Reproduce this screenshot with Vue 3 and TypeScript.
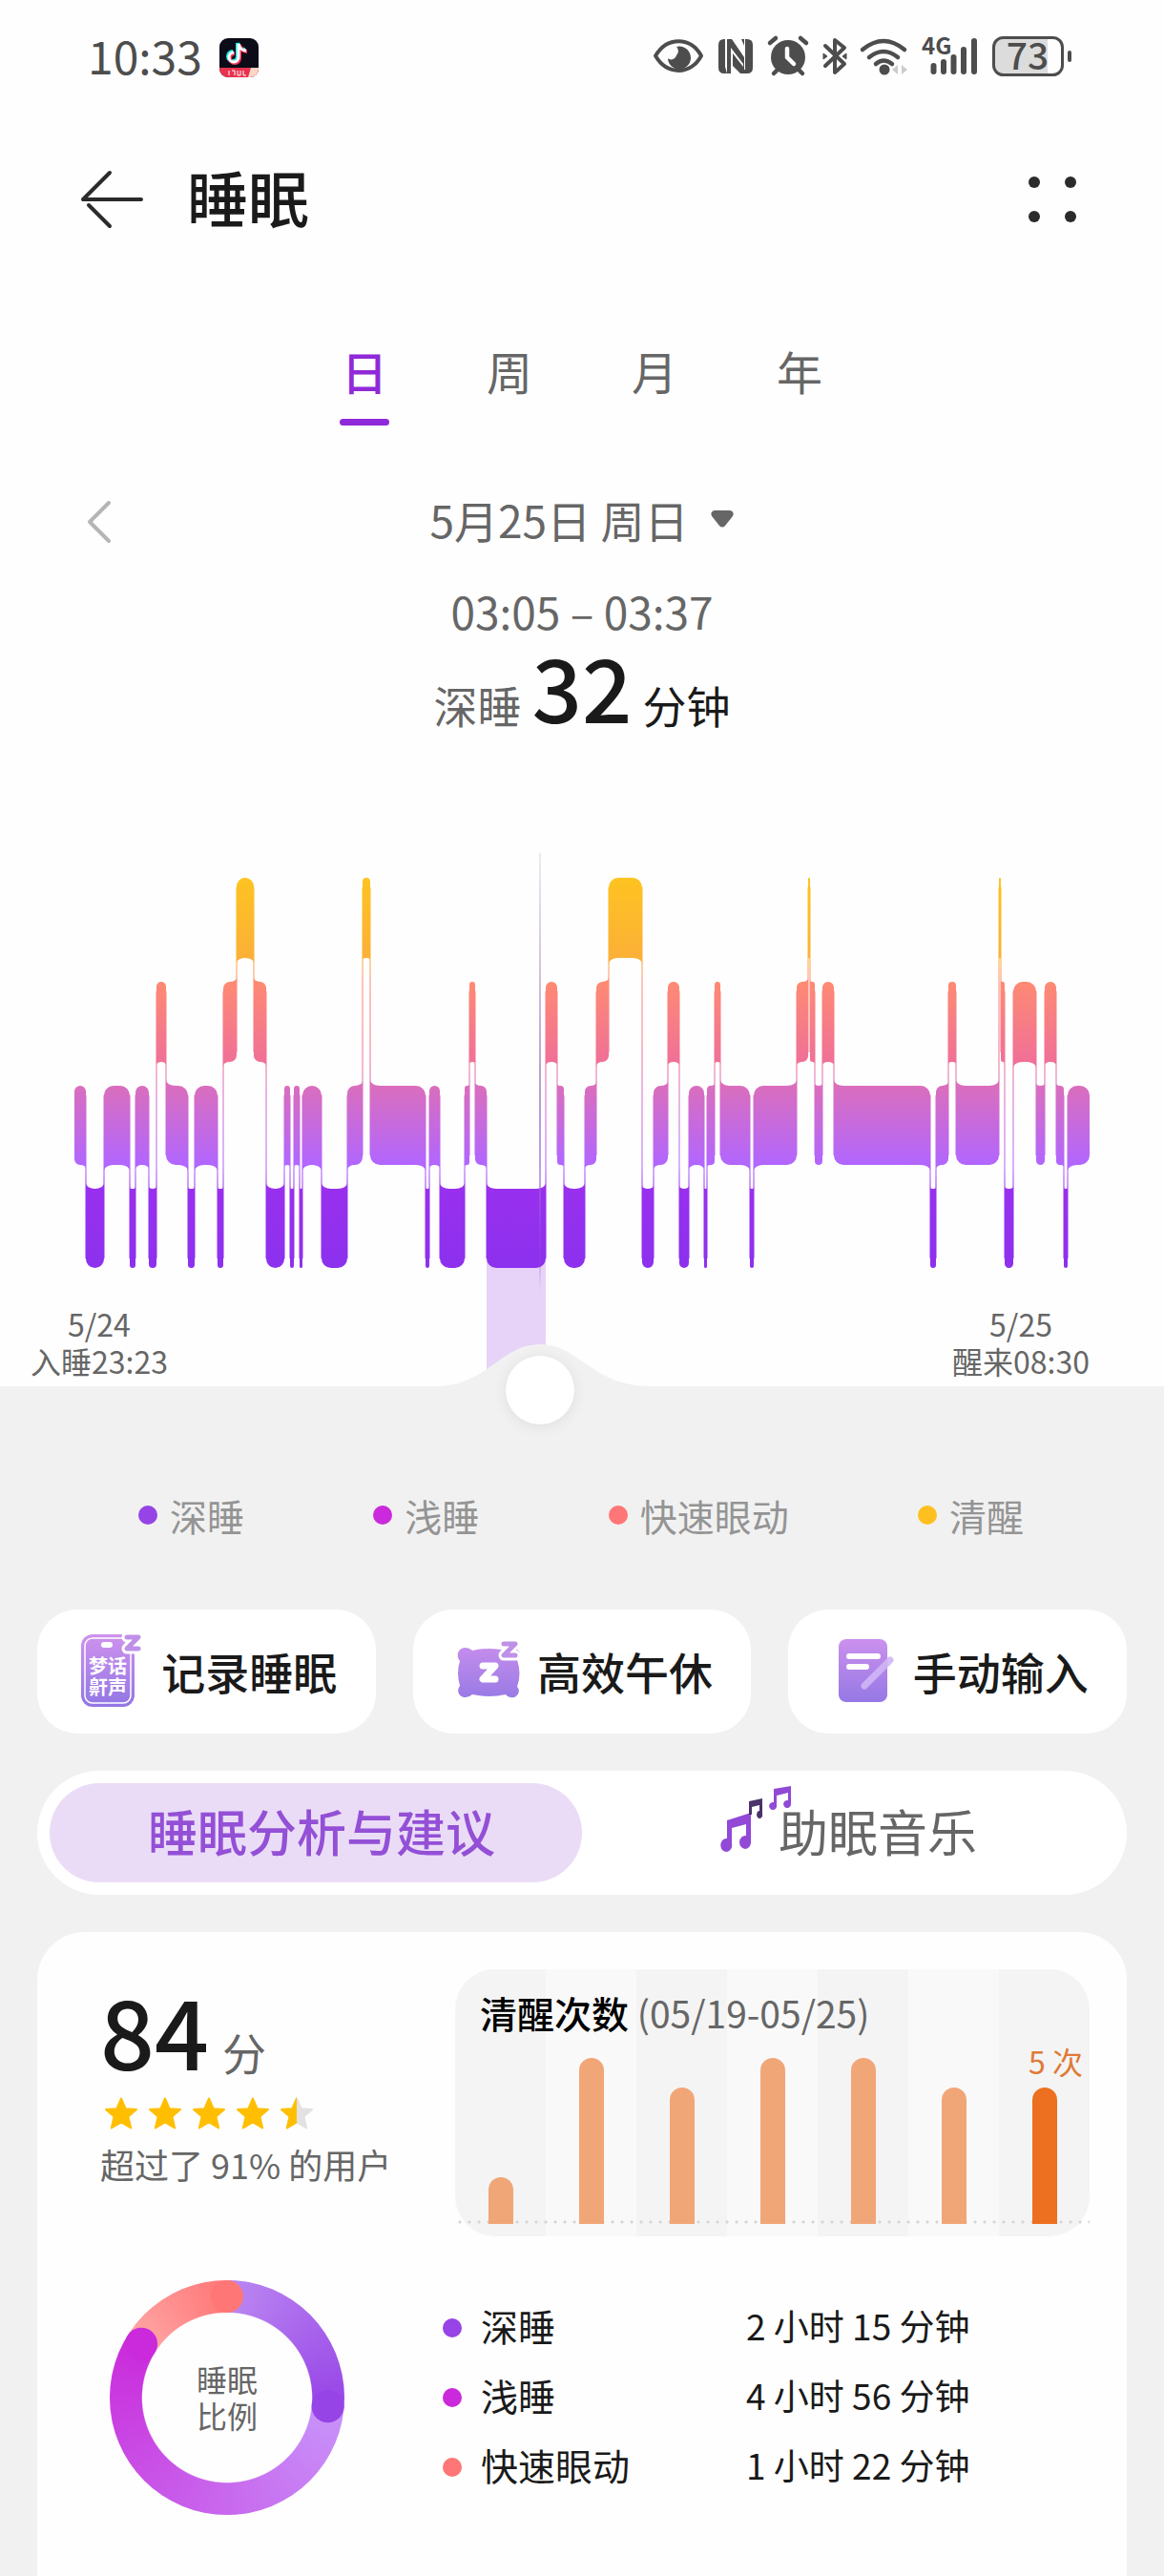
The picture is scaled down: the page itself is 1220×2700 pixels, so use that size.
<script setup lang="ts">
import { computed, ref } from 'vue'

type Level = 'A' | 'R' | 'L' | 'D'

const bands: Record<Level, { top: number; bottom: number; rank: number }> = {
  A: { top: 921, bottom: 1005, rank: 3 },
  R: { top: 1030, bottom: 1114, rank: 2 },
  L: { top: 1139, bottom: 1222, rank: 1 },
  D: { top: 1247, bottom: 1330, rank: 0 },
}

// Start of each sleep phase on the chart's horizontal axis
const phases: [number, Level][] = [
  [78, 'L'], [90, 'D'], [109, 'L'], [136, 'D'], [142, 'L'], [156, 'D'], [164, 'R'], [174, 'L'],
  [197, 'D'], [204, 'L'], [228, 'D'], [234, 'R'], [248, 'A'], [266, 'R'], [279, 'D'], [298, 'L'],
  [304, 'D'], [308, 'L'], [314, 'D'], [317, 'L'], [337, 'D'], [364, 'L'], [380, 'A'], [388, 'L'],
  [446, 'D'], [450, 'L'], [461, 'D'], [487, 'L'], [492, 'R'], [498, 'L'], [510, 'D'], [572, 'R'],
  [584, 'L'], [591, 'D'], [613, 'L'], [625, 'R'], [638, 'A'], [673, 'D'], [685, 'L'], [700, 'R'],
  [712, 'D'], [722, 'L'], [738, 'D'], [741, 'L'], [749, 'R'], [755, 'L'], [786, 'D'], [790, 'L'],
  [835, 'R'], [847, 'A'], [849, 'R'], [854, 'L'], [862, 'R'], [874, 'L'], [975, 'D'], [981, 'L'],
  [994, 'R'], [1002, 'L'], [1047, 'A'], [1049, 'R'], [1053, 'D'], [1062, 'R'], [1086, 'L'],
  [1095, 'R'], [1107, 'L'], [1115, 'D'], [1119, 'L'],
]
const axisStart = 78
const axisEnd = 1142

const segments = phases.map(([x, level], i) => {
  const end = i + 1 < phases.length ? phases[i + 1][0] : axisEnd
  const { top, bottom, rank } = bands[level]
  const prev = i > 0 ? bands[phases[i - 1][1]].rank : null
  const next = i + 1 < phases.length ? bands[phases[i + 1][1]].rank : null
  const r = Math.min(10, (end - x) / 2)
  const f = r * 0.6
  // An edge flares towards its neighbour's band and is rounded on the far side
  const tl = prev !== null && prev > rank ? -f : r
  const tr = next !== null && next > rank ? -f : r
  const bl = prev !== null && prev < rank ? -f : r
  const br = next !== null && next < rank ? -f : r
  const arc = (v: number, toX: number, toY: number) => `A${r} ${Math.abs(v)} 0 0 ${v > 0 ? 1 : 0} ${toX} ${toY}`
  const path =
    `M${x} ${top + tl}${arc(tl, x + r, top)}L${end - r} ${top}${arc(tr, end, top + tr)}` +
    `L${end} ${bottom - br}${arc(br, end - r, bottom)}L${x + r} ${bottom}${arc(bl, x, bottom - bl)}Z`
  return { x, end, level, path }
})

const connectors = segments.slice(1).map((s, i) => {
  const a = bands[segments[i].level]
  const b = bands[s.level]
  const up = a.top < b.top ? a : b
  const down = a.top < b.top ? b : a
  return { x: s.x, y: up.top + 10, height: down.bottom - up.top - 20 }
})

const position = ref(459)
const cursorX = computed(() => Math.round(axisStart + (position.value / 1000) * (axisEnd - axisStart)))
const selected = computed(() => segments.find((s) => cursorX.value < s.end) ?? segments[segments.length - 1])
const hill = computed(() => {
  const c = cursorX.value
  return `M0 1454H${c - 112}C${c - 54} 1454 ${c - 42} 1410 ${c} 1410C${c + 42} 1410 ${c + 54} 1454 ${c + 116} 1454H1220V1494H0Z`
})

const ranges = ['日', '周', '月', '年']
const range = ref('日')

const legend = [
  { name: '深睡', color: '#9744e6' },
  { name: '浅睡', color: '#ca2adb' },
  { name: '快速眼动', color: '#ff7676' },
  { name: '清醒', color: '#fec021' },
]

const durations = [
  { name: '深睡', color: '#9744e6', time: '2 小时 15 分钟' },
  { name: '浅睡', color: '#ca2adb', time: '4 小时 56 分钟' },
  { name: '快速眼动', color: '#ff7676', time: '1 小时 22 分钟' },
]

const awake = [49, 174, 143, 174, 174, 143, 143]
const star = 'M17 1.500L21.600 12.200L33 13L24.400 20.600L27.200 32.500L17 26.400L6.800 32.500L9.600 20.600L1 13L12.400 12.200Z'

function capAt(degrees: number) {
  const a = (degrees * Math.PI) / 180
  return { cx: 123 + 106 * Math.sin(a), cy: 123 - 106 * Math.cos(a) }
}
const caps = [
  { ...capAt(95), color: '#9744e6' },
  { ...capAt(302), color: '#ca2adb' },
  { ...capAt(0), color: '#ff7676' },
]
</script>

<template>
  <div class="page">
    <section class="top">
      <div class="status">
        <span class="clock">10:33</span>
        <svg class="app" width="41" height="41" viewBox="0 0 41 41">
          <defs><clipPath id="appclip"><rect width="41" height="41" rx="9" /></clipPath></defs>
          <g clip-path="url(#appclip)">
            <rect width="41" height="41" fill="#0c0c18" />
            <g fill="none" stroke-width="4">
              <path d="M20 6v14a5 5 0 1 1-5-5M20 6c1 4 4 7 8 7" stroke="#25e8e4" transform="translate(-1 -1)" />
              <path d="M20 6v14a5 5 0 1 1-5-5M20 6c1 4 4 7 8 7" stroke="#f5365c" transform="translate(1 1)" />
              <path d="M20 6v14a5 5 0 1 1-5-5M20 6c1 4 4 7 8 7" stroke="#fff" stroke-width="3" />
            </g>
            <rect y="31" width="41" height="10" fill="#e8324f" />
            <path d="M33 31h8v10H30z" fill="#ffd6c4" />
            <path d="M10 34v5M13 34h3v5M19 34v5h3v-5M25 34v5h3" stroke="#fff" stroke-width="1" fill="none" />
          </g>
        </svg>
        <svg class="indicators" width="460" height="60" viewBox="0 0 460 60" fill="none" stroke="#4d4d4d">
          <path d="M11 28.500C23 8 48 8 59 28.500C48 49 23 49 11 28.500Z" stroke-width="4" stroke-linejoin="round" />
          <path d="M33 19a12 12 0 1 1-9 12c3 3 8 1 9-3 3-3 2-7 0-9Z" fill="#4d4d4d" stroke="none" />
          <g stroke="none" fill="#4d4d4d">
            <path d="M83 11h1v29l2 7h-3q-6 0-6-6V17q0-6 6-6Z" />
            <path d="M86 11h5l13 19V18l-3-7h6q6 0 6 6v24q0 6-6 6h-4V37L90 20v27h-4Z" />
            <path d="M92 26l11 14v7h-3l-8-8Z" />
            <path d="M104 11h1v32h-1z" fill="#fff" />
            <circle cx="150" cy="30" r="18" />
          </g>
          <path d="M131 15l6-5M169 15l-6-5M139 43l-4 4M161 43l4 4" stroke-width="4.500" stroke-linecap="round" />
          <path d="M149 21v9l7 7" stroke="#fefefe" stroke-width="4.500" stroke-linecap="round" />
          <path d="M189 18l20 19-10 9V12l10 8-20 19" stroke-width="4" stroke-linejoin="round" stroke-linecap="round" />
          <path d="M187 26v6l4-3zM211 26v6l-4-3z" fill="#4d4d4d" stroke-width="1" />
          <path d="M228 22q22-18 44 0M235 30q15-12 30 0M242 37q8-7 17 0" stroke-width="4.500" stroke-linecap="round" />
          <circle cx="251" cy="43" r="5.500" fill="#4d4d4d" stroke="none" />
          <path d="M265 38v10l-6-5zM269 38v10l6-5z" fill="#ccc" stroke="none" />
          <text x="290" y="27" class="net">4G</text>
          <path d="M302.500 39v6M313 35v10M323.500 30v15M334 22v23M345 13v32" stroke-width="6" stroke-linecap="round" />
          <path d="M376 10h46v38h-46q-10 0-10-10V20q0-10 10-10z" fill="#dcdcdc" stroke="none" />
          <rect x="365.500" y="9.500" width="72" height="39" rx="10" stroke-width="3" />
          <path d="M445 25v8" stroke-width="4" stroke-linecap="round" />
          <text x="401" y="43" text-anchor="middle" class="charge">73</text>
        </svg>
      </div>

      <header class="header">
        <button class="icon-button" aria-label="返回">
          <svg width="66" height="60" viewBox="0 0 66 60" fill="none" stroke="#2b2b2b" stroke-width="4" stroke-linecap="round" stroke-linejoin="round">
            <path d="M31 2L3 30h61M9 36l22 22" />
          </svg>
        </button>
        <h1>睡眠</h1>
        <button class="icon-button more" aria-label="更多">
          <svg width="50" height="50" viewBox="0 0 50 50" fill="#2b2b2b">
            <circle cx="6" cy="7" r="6" /><circle cx="44" cy="7" r="6" />
            <circle cx="6" cy="43" r="6" /><circle cx="44" cy="43" r="6" />
          </svg>
        </button>
      </header>

      <nav class="tabs">
        <button v-for="r in ranges" :key="r" :class="{ active: r === range }" @click="range = r">{{ r }}</button>
      </nav>

      <div class="date-row">
        <button class="icon-button" aria-label="前一天">
          <svg width="26" height="46" viewBox="0 0 26 46" fill="none" stroke="#b5b5b5" stroke-width="4" stroke-linecap="round" stroke-linejoin="round"><path d="M23 3L3 23l20 20" /></svg>
        </button>
        <button class="date">
          5月25日 周日
          <svg width="24" height="18" viewBox="0 0 24 18" fill="#666"><path d="M4 0h16q5 1 3 6l-8 10q-3 3-6 0L1 6Q-1 1 4 0Z" /></svg>
        </button>
      </div>

      <p class="span-time">03:05 – 03:37</p>
      <p class="span-value"><span>深睡</span><strong>32</strong><em>分钟</em></p>
    </section>

    <div class="chart">
      <svg viewBox="0 880 1220 614" aria-hidden="true">
        <defs>
          <linearGradient id="phase" gradientUnits="userSpaceOnUse" x1="0" y1="921" x2="0" y2="1330">
            <stop offset="0" stop-color="#fec321" />
            <stop offset="0.205" stop-color="#fbb037" />
            <stop offset="0.267" stop-color="#fe8a73" />
            <stop offset="0.472" stop-color="#f07097" />
            <stop offset="0.533" stop-color="#da6ebd" />
            <stop offset="0.736" stop-color="#b166ff" />
            <stop offset="0.797" stop-color="#9830ee" />
            <stop offset="1" stop-color="#8c31ee" />
          </linearGradient>
          <linearGradient id="cursor" x1="0" y1="0" x2="0" y2="1">
            <stop offset="0" stop-color="#eeeaf0" />
            <stop offset="0.500" stop-color="#b9a0d0" />
            <stop offset="0.900" stop-color="#9345d8" stop-opacity="0.400" />
            <stop offset="1" stop-color="#9345d8" stop-opacity="0" />
          </linearGradient>
        </defs>
        <rect y="880" width="1220" height="575" fill="#fefefe" />
        <rect :x="selected.x" y="1318" :width="selected.end - selected.x" height="130" fill="#e6d3f7" />
        <path :d="hill" fill="#f1f1f1" />
        <g fill="url(#phase)">
          <path v-for="s in segments" :key="s.x" :d="s.path" />
          <rect v-for="c in connectors" :key="c.x" :x="c.x - 0.5" :y="c.y" width="1" :height="c.height" />
        </g>
        <rect :x="cursorX - 1" y="895" width="2" height="460" fill="url(#cursor)" />
      </svg>
      <div class="bounds">
        <p>5/24<br />入睡23:23</p>
        <p>5/25<br />醒来08:30</p>
      </div>
      <input v-model.number="position" class="scrubber" type="range" min="0" max="1000" aria-label="时间位置" />
    </div>

    <ul class="legend">
      <li v-for="l in legend" :key="l.name"><i class="dot" :style="{ background: l.color }"></i>{{ l.name }}</li>
    </ul>

    <div class="actions">
      <button>
        <svg width="80" height="80" viewBox="0 0 80 80">
          <defs>
            <linearGradient id="lilac" gradientUnits="userSpaceOnUse" x1="0" y1="2" x2="0" y2="77">
              <stop offset="0" stop-color="#cf92ee" /><stop offset="1" stop-color="#9277e4" />
            </linearGradient>
          </defs>
          <rect x="6" y="2" width="56" height="76" rx="12" fill="url(#lilac)" />
          <rect x="10" y="6" width="48" height="68" rx="8" fill="none" stroke="#fff" stroke-width="1.500" />
          <rect x="27" y="10" width="12" height="6" rx="3" fill="#fff" />
          <text x="34" y="43" text-anchor="middle" class="badge">梦话</text>
          <text x="34" y="65" text-anchor="middle" class="badge">鼾声</text>
          <path d="M54 5h12L54 17h12" class="z-halo" /><path d="M54 5h12L54 17h12" class="z" />
        </svg>
        记录睡眠
      </button>
      <button>
        <svg width="80" height="80" viewBox="0 0 80 80">
          <path d="M14 16q5 0 8 3 18-4 35 0c4-4 15-3 15 4q0 3-3 6 5 14 0 28c5 5-1 13-7 11q-3 0-5-3-17 4-35 0-3 3-7 3c-7 0-10-7-6-12q-4-14 0-26c-5-6-1-14 5-14Z" fill="url(#lilac)" />
          <path d="M33 35h13L33 49h13" fill="none" stroke="#fff" stroke-width="7" stroke-linecap="round" stroke-linejoin="round" />
          <path d="M55 12h12L55 24h12" class="z-halo" /><path d="M55 12h12L55 24h12" class="z" />
        </svg>
        高效午休
      </button>
      <button>
        <svg width="80" height="80" viewBox="0 0 80 80" stroke-linecap="round">
          <rect x="12" y="7" width="51" height="66" rx="8" fill="url(#lilac)" />
          <path d="M23 25h30M23 36h18" stroke="#fff" stroke-width="6" />
          <path d="M66 29L39 56" stroke="#d0b6f5" stroke-width="7" stroke-opacity="0.900" />
        </svg>
        手动输入
      </button>
    </div>

    <div class="switch">
      <button class="on">睡眠分析与建议</button>
      <button>
        <svg width="62" height="66" viewBox="0 0 62 66" fill="#9149d6">
          <path d="M8 36L33 28V58a6 7 0 1 1-5-6V40L13 44V60a6 7 0 1 1-5-5Z" />
          <path d="M31 16L45 13V29a3 4 0 1 1-3-3V20L34 22V30H31Z" fill="#4b3269" />
          <path d="M57 3L75 0V18a4 4 0 1 1-3-3V7L60 10V20a4 4 0 1 1-3-3Z" />
        </svg>
        助眠音乐
      </button>
    </div>

    <section class="report">
      <div class="summary">
        <div class="score">
          <p class="points"><strong>84</strong><span>分</span></p>
          <div class="stars" role="img" aria-label="4.5">
            <svg v-for="n in 5" :key="n" width="34" height="34" viewBox="0 0 34 34" stroke-width="2" stroke-linejoin="round">
              <template v-if="n < 5"><path :d="star" fill="#ffbf00" stroke="#ffbf00" /></template>
              <template v-else>
                <defs><clipPath id="half"><rect width="17" height="34" /></clipPath></defs>
                <path :d="star" fill="#e2e2e4" stroke="#e2e2e4" />
                <path :d="star" fill="#ffbf00" stroke="#ffbf00" clip-path="url(#half)" />
              </template>
            </svg>
          </div>
          <p class="rank">超过了 91% 的用户</p>
        </div>
        <div class="awake">
          <h2>清醒次数 <span>(05/19-05/25)</span></h2>
          <div class="bars">
            <div v-for="(h, i) in awake" :key="i" class="col"><i :class="{ today: i === 6 }" :style="{ height: h + 'px' }"></i></div>
          </div>
          <span class="today-label">5 次</span>
        </div>
      </div>

      <div class="breakdown">
        <div class="ring">
          <svg width="246" height="246" viewBox="0 0 246 246">
            <circle v-for="c in caps" :key="c.color" :cx="c.cx" :cy="c.cy" r="17" :fill="c.color" />
          </svg>
          <p>睡眠<br />比例</p>
        </div>
        <table>
          <tbody>
            <tr v-for="d in durations" :key="d.name">
              <th scope="row"><i class="dot" :style="{ background: d.color }"></i>{{ d.name }}</th>
              <td>{{ d.time }}</td>
            </tr>
          </tbody>
        </table>
      </div>
    </section>
  </div>
</template>

<style>
body {
  margin: 0;
  background: #f1f1f1;
}
</style>

<style scoped>
.page {
  display: flex;
  flex-direction: column;
  min-height: 100vh;
  font-family: "Noto Sans CJK SC", "Noto Sans", sans-serif;
  color: #1a1a1a;
  background: #f1f1f1;
}
p, h1, h2, ul {
  margin: 0;
  padding: 0;
}
button {
  margin: 0;
  padding: 0;
  border: 0;
  background: none;
  font: inherit;
  color: inherit;
}
svg {
  display: block;
  flex: none;
  overflow: visible;
}
.top {
  padding-bottom: 113px;
  background: #fefefe;
}
.status {
  display: flex;
  align-items: center;
  height: 120px;
  padding: 0 84px 0 92px;
}
.clock {
  padding-bottom: 6px;
  font-size: 48px;
  line-height: 60px;
  color: #4d4d4d;
}
.app {
  margin-left: 18px;
}
.indicators {
  margin-left: auto;
}
.net {
  font-size: 24px;
  font-weight: 700;
  fill: #4d4d4d;
  stroke: none;
}
.charge {
  font-size: 39px;
  font-weight: 500;
  fill: #4d4d4d;
  stroke: none;
}
.header {
  display: flex;
  align-items: center;
  height: 178px;
  padding: 0 92px 0 84px;
}
.header h1 {
  margin-left: 46px;
  padding-bottom: 8px;
  font-size: 64px;
  font-weight: 500;
  line-height: 80px;
}
.more {
  margin-left: auto;
}
.tabs {
  display: flex;
  justify-content: center;
  gap: 100px;
  margin-top: 60px;
}
.tabs button {
  width: 52px;
  padding-bottom: 28px;
  font-size: 48px;
  line-height: 60px;
  color: #666;
  position: relative;
}
.tabs .active {
  font-weight: 500;
  color: #9029d9;
}
.tabs .active::after {
  content: "";
  position: absolute;
  left: 0;
  right: 0;
  bottom: 0;
  height: 7px;
  border-radius: 4px;
  background: #9029d9;
}
.date-row {
  display: grid;
  grid-template-columns: 1fr auto 1fr;
  align-items: center;
  margin-top: 68px;
  padding: 0 91px;
}
.date-row .icon-button {
  justify-self: start;
}
.date {
  display: flex;
  align-items: center;
  gap: 24px;
  padding-bottom: 6px;
  font-size: 46px;
  line-height: 60px;
  color: #666;
}
.span-time {
  margin-top: 30px;
  font-size: 46px;
  line-height: 60px;
  text-align: center;
  color: #666;
}
.span-value {
  display: flex;
  justify-content: center;
  align-items: baseline;
  gap: 11px;
  font-size: 46px;
  line-height: 46px;
}
.span-value span {
  color: #666;
}
.span-value strong {
  font-size: 92px;
  font-weight: 500;
  line-height: 96px;
}
.span-value em {
  font-style: normal;
}
.chart {
  display: grid;
}
.chart > * {
  grid-area: 1 / 1;
}
.chart > svg {
  width: 100%;
}
.bounds {
  display: flex;
  justify-content: space-between;
  align-self: end;
  padding: 0 78px 47px 32px;
  font-size: 32px;
  line-height: 39px;
  text-align: center;
  color: #666;
}
.scrubber {
  align-self: end;
  appearance: none;
  height: 72px;
  margin: 0 42px;
  background: none;
  position: relative;
}
.scrubber::-webkit-slider-thumb {
  appearance: none;
  width: 72px;
  height: 72px;
  border-radius: 50%;
  background: #fff;
  box-shadow: 0 2px 16px rgba(0, 0, 0, 0.08);
}
.dot {
  display: inline-block;
  width: 20px;
  height: 20px;
  border-radius: 50%;
}
.legend {
  display: flex;
  justify-content: space-between;
  margin-top: 65px;
  padding: 0 147px 0 145px;
  list-style: none;
  font-size: 39px;
  line-height: 60px;
  color: #949494;
}
.legend li {
  display: flex;
  align-items: center;
  gap: 13px;
}
.actions {
  display: grid;
  grid-template-columns: repeat(3, 1fr);
  gap: 39px;
  margin: 69px 39px 0;
}
.actions button {
  display: flex;
  align-items: center;
  justify-content: center;
  gap: 10px;
  height: 130px;
  padding-bottom: 3px;
  border-radius: 42px;
  background: #fff;
  font-size: 46px;
  font-weight: 500;
  line-height: 60px;
}
.badge {
  font-size: 20px;
  font-weight: 700;
  fill: #fff;
}
.z, .z-halo {
  fill: none;
  stroke: #bf90e8;
  stroke-width: 5;
  stroke-linecap: round;
  stroke-linejoin: round;
}
.z-halo {
  stroke: #fff;
  stroke-width: 11;
}
.switch {
  display: grid;
  grid-template-columns: 1fr 1fr;
  margin: 39px 39px 0;
  padding: 13px;
  border-radius: 65px;
  background: #fff;
}
.switch button {
  display: flex;
  align-items: center;
  justify-content: center;
  height: 104px;
  padding-bottom: 4px;
  border-radius: 52px;
  font-size: 52px;
  line-height: 60px;
  color: #666;
}
.switch svg {
  margin-bottom: 28px;
}
.switch .on {
  padding-left: 12px;
  background: #eadcf6;
  font-weight: 500;
  color: #9350d6;
}
.report {
  flex: 1;
  margin: 39px 39px 0;
  padding: 39px 39px 0 66px;
  border-radius: 50px 50px 0 0;
  background: #fefefe;
}
.summary {
  display: grid;
  grid-template-columns: 372fr 665fr;
}
.points {
  display: flex;
  align-items: baseline;
  gap: 14px;
  margin-top: 15px;
  line-height: 46px;
}
.points strong {
  font-size: 100px;
  font-weight: 500;
  line-height: 96px;
}
.points span {
  font-size: 46px;
  color: #666;
}
.stars {
  display: flex;
  gap: 12px;
  margin: 23px 0 0 5px;
}
.rank {
  margin-top: 12px;
  font-size: 36px;
  line-height: 48px;
  color: #666;
}
.awake {
  position: relative;
  display: flex;
  flex-direction: column;
  justify-content: space-between;
  box-sizing: border-box;
  height: 280px;
  padding: 18px 0 13px;
  border-radius: 42px;
  background: repeating-linear-gradient(90deg, #f4f4f4 0 14.286%, #f9f9f9 14.286% 28.571%);
}
.awake h2 {
  padding-left: 26px;
  font-size: 39px;
  font-weight: 500;
  line-height: 54px;
  color: #000;
}
.awake h2 span {
  font-weight: 400;
  color: #666;
}
.bars {
  display: grid;
  grid-template-columns: repeat(7, 1fr);
  align-items: end;
  height: 174px;
  background: radial-gradient(circle, #d4d4d4 1px, transparent 2px) 0 100% / 10px 4px repeat-x;
}
.col {
  display: flex;
  justify-content: center;
}
.col i {
  width: 26px;
  border-radius: 13px 13px 0 0;
  background: #f1a678;
}
.col .today {
  background: #ec7020;
}
.today-label {
  position: absolute;
  top: 74px;
  right: 7px;
  font-size: 32px;
  line-height: 44px;
  color: #df7a37;
}
.breakdown {
  display: flex;
  margin-top: 46px;
  padding-left: 10px;
}
.ring {
  display: grid;
  place-items: center;
  width: 246px;
  height: 246px;
  border-radius: 50%;
  background:
    radial-gradient(closest-side, #fefefe 0 72%, transparent 73%),
    conic-gradient(#bb88f2 0, #9744e6 95deg, #c794fa 95deg, #ca2adb 302deg, #ffa6a6 302deg, #ff7676 360deg);
}
.ring > * {
  grid-area: 1 / 1;
}
.ring p {
  padding-bottom: 3px;
  font-size: 32px;
  line-height: 38px;
  color: #666;
}
table {
  align-self: center;
  margin: 0 0 6px 103px;
  border-collapse: collapse;
}
th, td {
  height: 73px;
  padding: 0;
  text-align: left;
  font-weight: 400;
  white-space: nowrap;
}
th {
  width: 318px;
  font-size: 39px;
}
th .dot {
  margin-right: 20px;
  vertical-align: 4px;
}
td {
  font-size: 37px;
}
</style>
